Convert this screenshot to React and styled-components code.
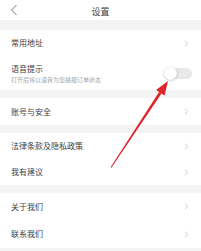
import styled, { createGlobalStyle } from "styled-components";

const GlobalStyle = createGlobalStyle`
    html, body {
        margin: 0;
        padding: 0;
        background: #f3f3f3;
    }
    body {
        font-family: "Noto Sans CJK SC", "Noto Sans", sans-serif;
    }
`;

const Page = styled.div`
    position: relative;
    width: 201px;
    height: 251px;
    overflow: hidden;
    background: #f3f3f3;
    display: flex;
    flex-direction: column;
    gap: 8px;
`;

const Header = styled.header`
    height: 20px;
    background: #ffffff;
    display: flex;
    align-items: center;
    justify-content: center;
    position: relative;
    margin-bottom: 2px;
`;

const BackButton = styled.svg`
    position: absolute;
    left: 10px;
    top: 4px;
`;

const Title = styled.h1`
    margin: 0;
    font-size: 9px;
    font-weight: 400;
    color: #444;
    line-height: 1;
    padding-top: 2px;
`;

const Card = styled.section`
    background: #ffffff;
    display: flex;
    flex-direction: column;
`;

const Row = styled.div`
    height: ${(props) => props.$height || 26}px;
    display: flex;
    align-items: center;
    justify-content: space-between;
    padding: 0 ${(props) => (props.$toggle ? 9 : 12)}px 0 11px;
`;

const TextBox = styled.div`
    display: flex;
    flex-direction: column;
    gap: 2px;
`;

const Label = styled.span`
    font-size: 8px;
    line-height: 10px;
    color: #404040;
`;

const Hint = styled.span`
    font-size: 6px;
    line-height: 7px;
    color: #a8a8a8;
`;

const Track = styled.div`
    position: relative;
    width: 27px;
    height: 11px;
    border-radius: 6px;
    background: #e8e8e8;
`;

const Knob = styled.div`
    position: absolute;
    left: -1px;
    top: -1px;
    width: 13px;
    height: 13px;
    border-radius: 50%;
    background: #ffffff;
    box-shadow: 0 0.5px 2px rgba(0, 0, 0, 0.3);
`;

const ArrowLayer = styled.svg`
    position: absolute;
    left: 0;
    top: 0;
    pointer-events: none;
`;

const Chevron = () => (
    <svg width="5" height="7" viewBox="0 0 5 7">
        <polyline points="1,0.8 3.8,3.5 1,6.2" fill="none" stroke="#c4c4c4" strokeWidth="0.9" />
    </svg>
);

const Item = ({ label, height }) => (
    <Row $height={height}>
        <Label>{label}</Label>
        <Chevron />
    </Row>
);

const App = () => (
    <>
        <GlobalStyle />
        <Page>
            <Header>
                <BackButton width="8" height="12" viewBox="0 0 8 12">
                    <polyline points="6.5,1 1.5,6 6.5,11" fill="none" stroke="#666" strokeWidth="0.9" />
                </BackButton>
                <Title>设置</Title>
            </Header>
            <Card>
                <Item label="常用地址" height={26} />
                <Row $height={34} $toggle>
                    <TextBox>
                        <Label>语音提示</Label>
                        <Hint>打开后将以语音为您播报订单状态</Hint>
                    </TextBox>
                    <Track>
                        <Knob />
                    </Track>
                </Row>
            </Card>
            <Card>
                <Item label="账号与安全" height={27} />
            </Card>
            <Card>
                <Item label="法律条款及隐私政策" height={26} />
                <Item label="我有建议" height={26} />
            </Card>
            <Card>
                <Item label="关于我们" height={27} />
                <Item label="联系我们" height={28} />
            </Card>
            <ArrowLayer width="201" height="251" viewBox="0 0 201 251">
                <polygon points="110.6,167.3 111.4,167.7 161.5,93.5 159.1,91.9" fill="#dc2228" />
                <polygon points="168,81 164.5,95.5 156.1,89.9" fill="#dc2228" />
            </ArrowLayer>
        </Page>
    </>
);

export default App;
